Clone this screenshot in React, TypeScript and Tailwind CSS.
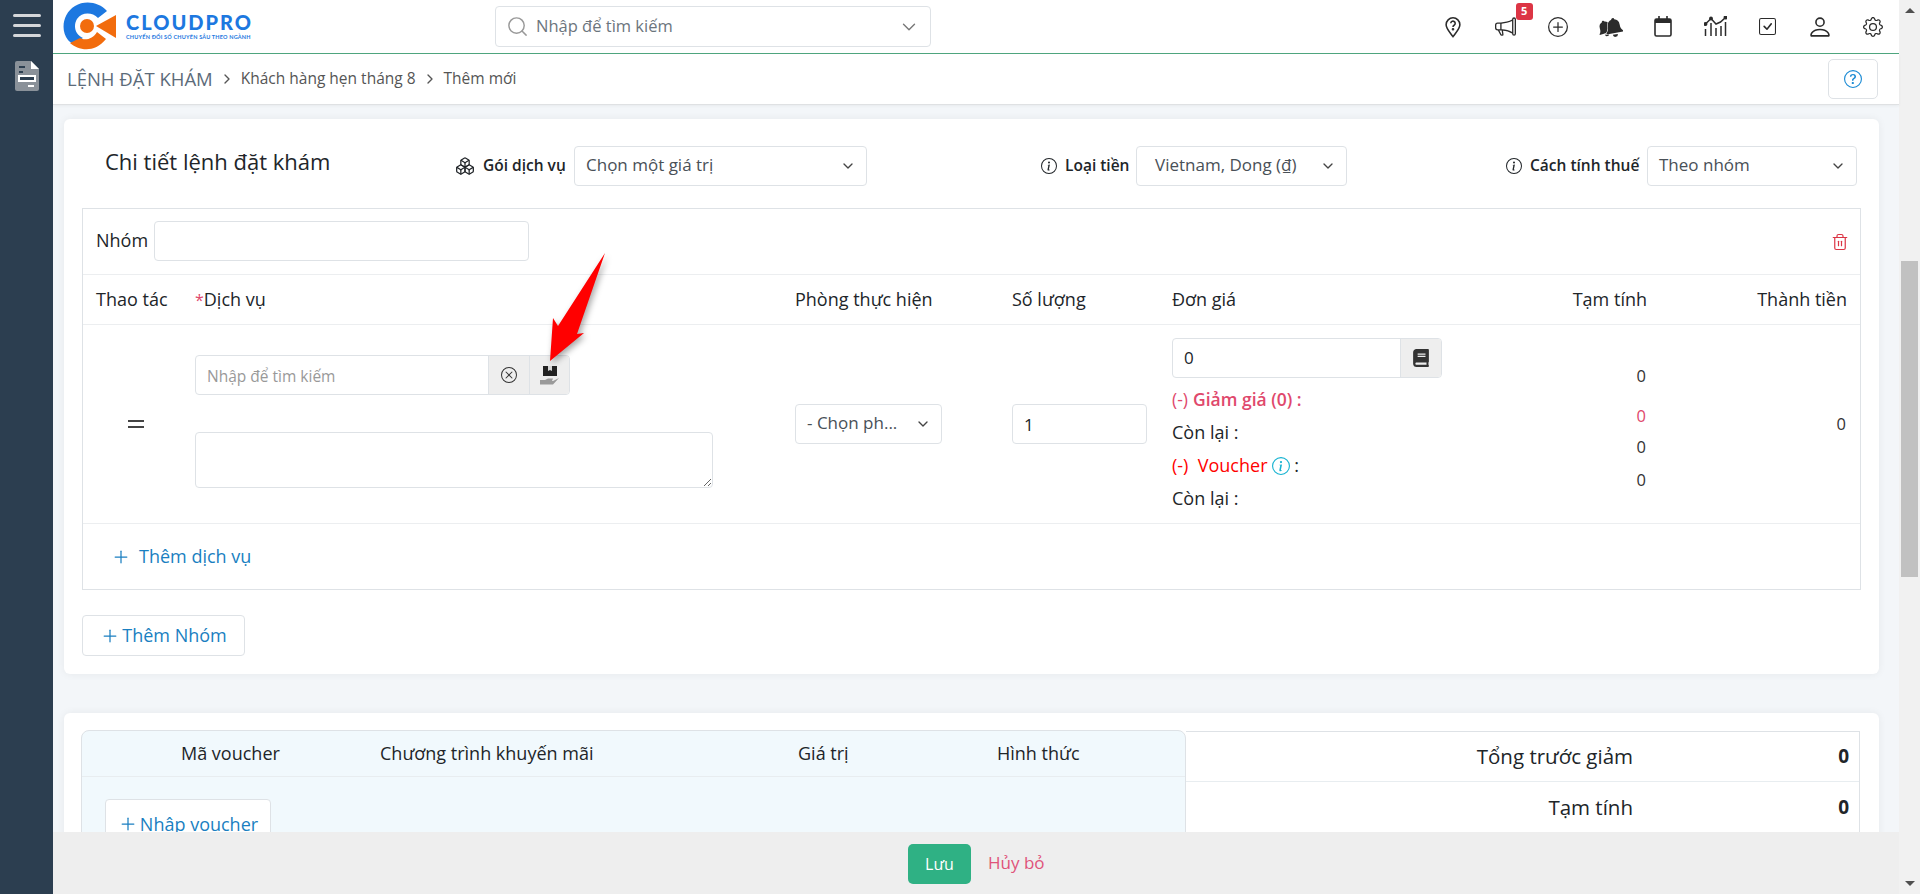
import { Boxes, ChevronDown, ChevronRight, Plus, Search, Trash2 } from "lucide-react";
import { BsCheckSquare, BsGear, BsInfoCircle, BsMegaphone, BsPerson, BsPlusCircle, BsQuestionCircle, BsXCircle } from "react-icons/bs";
import { FaBook } from "react-icons/fa";

const rowCols = "grid grid-cols-[112px_600px_217px_160px_275px_200px_201px]";
const field = "border border-[#dee2e6] rounded-[4px] bg-white outline-none";
const bellPath = "M10 1c-1 0-1.500.7-1.500 1.500C5.500 3.200 4 5.500 4 8.500c0 3.500-1 5-2.500 6.500v1h17v-1C17 13.500 16 12 16 8.500c0-3-1.500-5.300-4.500-6C11.500 1.700 11 1 10 1ZM7.500 17.500a2.500 2.500 0 0 0 5 0Z";

function Logo() {
  return (
    <div className="flex items-center ml-[10px] w-[200px]">
      <svg width="53" height="50" viewBox="0 0 53 50" className="shrink-0">
        <path d="M44 9C36 0 22-2 12 4 0 11-3 28 5 38c1 1 3 3 5 4l10-6c-8-4-10-12-6-19 5-7 15-7 21-1Z" fill="#1d78e0" />
        <path d="M7 41c8 7 24 11 36-4l-9-7c-4 7-12 9-17 6Z" fill="#f26c0d" />
        <circle cx="24" cy="24" r="7" fill="#f26c0d" />
        <path d="M33 24 53 13v23Z" fill="#f26c0d" />
      </svg>
      <div className="ml-[10px] font-['Lato',sans-serif] text-[#1d78e0]">
        <div className="text-[20px] leading-[20px] font-black tracking-[2px] whitespace-nowrap">CLOUDPRO</div>
        <div className="text-[5.5px] leading-[8px] font-bold whitespace-nowrap tracking-[0.2px] mt-[1px]">CHUYỂN ĐỔI SỐ CHUYÊN SÂU THEO NGÀNH</div>
      </div>
    </div>
  );
}

function PinHelp() {
  return (
    <svg width="20" height="22" viewBox="0 0 20 24" fill="none" stroke="#2b2b2b" strokeWidth="1.7">
      <path d="M10 22.5C6 17 2.5 13.5 2.5 9.5a7.5 7.5 0 0 1 15 0c0 4-3.500 7.500-7.500 13Z" />
      <path d="M7.600 8a2.400 2.400 0 1 1 3.600 2.100c-.8.500-1.200 1-1.200 1.900" />
      <circle cx="10" cy="14.500" r=".6" fill="#2b2b2b" />
    </svg>
  );
}

function DoubleBell() {
  return (
    <svg width="26" height="20" viewBox="0 0 26 20">
      <path d={bellPath} fill="#2b2b2b" transform="translate(0 2) rotate(-18 10 10) scale(.85)" />
      <path d={bellPath} fill="#2b2b2b" stroke="#ffffff" strokeWidth="1" paintOrder="stroke" transform="translate(7 0) rotate(-10 10 10)" />
    </svg>
  );
}

function CalendarIcon() {
  return (
    <svg width="18" height="21" viewBox="0 0 18 21" fill="none">
      <rect x="1" y="3" width="16" height="17" rx="1.500" stroke="#2b2b2b" strokeWidth="1.600" />
      <path d="M1 3h16v4H1Z" fill="#2b2b2b" />
      <path d="M5 0v4M13 0v4" stroke="#2b2b2b" strokeWidth="1.600" />
    </svg>
  );
}

function ChartIcon() {
  return (
    <svg width="23" height="21" viewBox="0 0 23 21" fill="none" stroke="#2b2b2b" strokeWidth="1.500">
      <path d="M1.500 8 7 2.500l5 5.500 4.500-2 5-4.500" />
      <path d="M1.500 13v7M7 7v13M12 12v8M17 10v10M21.500 6v14" />
      <circle cx="1.500" cy="8" r="1.200" fill="#2b2b2b" />
      <circle cx="7" cy="2.500" r="1.200" fill="#2b2b2b" />
      <circle cx="21.500" cy="1.500" r="1.200" fill="#2b2b2b" />
    </svg>
  );
}

function HeaderIcons() {
  const icons = [
    <PinHelp />,
    <div className="relative">
      <BsMegaphone size={21} color="#2b2b2b" />
      <span className="absolute -top-[13px] left-[21px] w-[17px] h-[17px] rounded-[3px] bg-[#dc3545] text-white text-[11px] font-bold flex items-center justify-center">5</span>
    </div>,
    <BsPlusCircle size={20} color="#2b2b2b" />,
    <DoubleBell />,
    <CalendarIcon />,
    <ChartIcon />,
    <BsCheckSquare size={17} color="#2b2b2b" />,
    <BsPerson size={26} color="#2b2b2b" />,
    <BsGear size={20} color="#2b2b2b" />,
  ];
  return (
    <div className="flex items-center">
      {icons.map((icon, i) => (
        <div key={i} className="w-[52.5px] flex items-center justify-center">{icon}</div>
      ))}
    </div>
  );
}

function SelectBox({ label, width, pad = "pl-[11px]" }: { label: string; width: string; pad?: string }) {
  return (
    <div className={`${field} ${width} ${pad} h-[40px] shrink-0 flex items-center justify-between pr-[10px] text-[17px] font-normal text-[#495057]`}>
      <span className="whitespace-nowrap -mt-[2px]">{label}</span>
      <ChevronDown size={16} color="#444" className="shrink-0" />
    </div>
  );
}

function HandBox() {
  return (
    <svg width="20" height="19" viewBox="0 0 20 19">
      <path d="M3 0h14v10H3Z" fill="#222" />
      <path d="M8 0h4v5l-2-1-2 1Z" fill="#d8d8d8" />
      <path d="M0 14h5l3-1.500h5l-1 2.500H8h5l6-3-6 6.500H0Z" fill="#9a9a9a" />
    </svg>
  );
}

function ArrowMark() {
  // annotation drawn on top of the screenshot
  return (
    <svg width="70" height="120" viewBox="0 0 70 120" className="absolute left-[543px] top-[250px] pointer-events-none drop-shadow-[2px_3px_3px_rgba(0,0,0,0.35)]">
      <path d="M62 3 34 84l7-1L7 111l3-43 5 8Z" fill="#ff0000" />
    </svg>
  );
}

function GroupBox() {
  return (
    <div className="mx-[18px] mt-[22px] border border-[#dee2e6] text-[18px] text-[#212529]">
      <div className="h-[66px] pb-[2px] flex items-center justify-between pl-[13px] pr-[11px] border-b border-[#eceef0]">
        <div className="flex items-center gap-[6px]">
          <span className="font-medium">Nhóm</span>
          <input className={`${field} w-[375px] h-[40px]`} />
        </div>
        <Trash2 size={18} color="#dc3545" strokeWidth={1.600} className="mt-[2px]" />
      </div>
      <div className={`${rowCols} h-[50px] items-center border-b border-[#eceef0] font-medium`}>
        <div className="pl-[13px]">Thao tác</div>
        <div><span className="text-[16px] font-normal text-[#e0486c]">*</span>Dịch vụ</div>
        <div>Phòng thực hiện</div>
        <div>Số lượng</div>
        <div>Đơn giá</div>
        <div className="text-right">Tạm tính</div>
        <div className="text-right pr-[1px]">Thành tiền</div>
      </div>
      <div className={`${rowCols} h-[199px] border-b border-[#eceef0]`}>
        <div className="flex items-center pl-[45px]">
          <div className="w-[16px] h-[8px] border-y-2 border-[#444]" />
        </div>
        <div className="pt-[30px]">
          <div className={`${field} w-[375px] h-[40px] flex overflow-hidden`}>
            <input placeholder="Nhập để tìm kiếm" className="flex-1 min-w-0 pl-[11px] pt-[3px] text-[15.5px] outline-none placeholder:text-[#999]" />
            <div className="w-[41px] bg-[#eeeeee] border-l border-[#dee2e6] flex items-center justify-center">
              <BsXCircle size={16} color="#333" />
            </div>
            <div className="w-[40px] bg-[#eeeeee] border-l border-[#dee2e6] flex items-center justify-center">
              <HandBox />
            </div>
          </div>
          <textarea className={`${field} block w-[518px] h-[56px] mt-[37px]`} />
        </div>
        <div className="flex items-center">
          <SelectBox label="- Chọn ph..." width="w-[147px]" />
        </div>
        <div className="flex items-center">
          <input defaultValue="1" className={`${field} w-[135px] h-[40px] pl-[11px] text-[17px]`} />
        </div>
        <div className="pt-[13px] font-medium">
          <div className={`${field} w-[270px] h-[40px] flex overflow-hidden`}>
            <input defaultValue="0" className="flex-1 min-w-0 pl-[11px] text-[17px] font-normal outline-none" />
            <div className="w-[41px] bg-[#eeeeee] border-l border-[#dee2e6] flex items-center justify-center">
              <FaBook size={18} color="#333" />
            </div>
          </div>
          <div className="mt-[5px] h-[33px] flex items-center text-[17.5px] text-[#e0486c]">
            <span className="font-normal mr-[5px]">(-)</span><span className="font-semibold">Giảm giá (0) :</span>
          </div>
          <div className="h-[33px] flex items-center">Còn lại :</div>
          <div className="h-[33px] flex items-center">
            <span className="text-[#ff0000] whitespace-pre">(-)  Voucher </span>
            <BsInfoCircle size={18} color="#17b3d1" />
            <span className="ml-[4px]">:</span>
          </div>
          <div className="h-[33px] flex items-center">Còn lại :</div>
        </div>
        <div className="pr-[1px] pt-[41px] flex flex-col items-end text-[16.5px] leading-[20px] text-[#333]">
          <div>0</div>
          <div className="mt-[20px] text-[#e0486c]">0</div>
          <div className="mt-[11px]">0</div>
          <div className="mt-[13px]">0</div>
        </div>
        <div className="flex items-center justify-end pr-[2px] text-[16.5px] text-[#333]">0</div>
      </div>
      <div className="h-[65px] flex items-center pl-[28px] text-[#1a7fc1] gap-[8px]">
        <Plus size={20} strokeWidth={1.500} />
        <span>Thêm dịch vụ</span>
      </div>
    </div>
  );
}

function AddButton({ label, className }: { label: string; className: string }) {
  return (
    <div className={`${className} border border-[#dee2e6] rounded-[4px] bg-white flex items-center justify-center gap-[2px] text-[#1a7fc1] whitespace-nowrap`}>
      <Plus size={20} strokeWidth={1.500} />
      <span>{label}</span>
    </div>
  );
}

function VoucherCard() {
  return (
    <div className="mt-[39px] bg-white rounded-t-[6px] shadow-[0_0_8px_rgba(0,0,0,0.06)] pt-[17px] px-[17px] flex text-[#212529]">
      <div className="w-[1105px] bg-[#f1f9fd] border border-[#dee2e6] rounded-t-[8px]">
        <div className="h-[46px] relative flex items-center border-b border-[#e8edf0] text-[18px] font-medium">
          <span className="ml-[99px] w-[199px]">Mã voucher</span>
          <span className="w-[418px]">Chương trình khuyến mãi</span>
          <span className="w-[199px]">Giá trị</span>
          <span>Hình thức</span>
        </div>
        <AddButton label="Nhập voucher" className="ml-[23px] mt-[22px] w-[166px] h-[50px] text-[18px]" />
      </div>
      <div className="w-[674px] mt-[1px] border border-[#dee2e6] border-l-0 text-[20.5px] font-medium">
        <div className="h-[50px] flex items-center justify-end border-b border-[#e8edf0]">
          <span>Tổng trước giảm</span>
          <span className="w-[226px] pr-[10px] text-right text-[19px] font-bold">0</span>
        </div>
        <div className="h-[50px] flex items-center justify-end">
          <span>Tạm tính</span>
          <span className="w-[226px] pr-[10px] text-right text-[19px] font-bold">0</span>
        </div>
      </div>
    </div>
  );
}

function ScrollBar() {
  return (
    <div className="w-[21px] shrink-0 bg-[#f1f1f1] flex flex-col items-center justify-between py-[8px]">
      <div className="flex flex-col items-center w-full">
        <div className="border-x-[5px] border-x-transparent border-b-[5px] border-b-[#505050]" />
        <div className="w-[17px] h-[316px] bg-[#c1c1c1] mt-[248px]" />
      </div>
      <div className="border-x-[5px] border-x-transparent border-t-[5px] border-t-[#505050]" />
    </div>
  );
}

export default function App() {
  return (
    <div className="relative flex h-screen overflow-hidden font-['Open_Sans',sans-serif] text-[#212529]">
      <aside className="w-[53px] shrink-0 bg-[#2c3e50] flex flex-col items-center">
        <div className="mt-[14px] flex flex-col gap-[7px] w-[28px]">
          <div className="h-[3px] rounded-full bg-[#d5d7da]" />
          <div className="h-[3px] rounded-full bg-[#d5d7da]" />
          <div className="h-[3px] rounded-full bg-[#d5d7da]" />
        </div>
        <svg width="24" height="30" viewBox="0 0 24 30" className="mt-[24px]">
          <path d="M2 0h14l8 8v20a2 2 0 0 1-2 2H2a2 2 0 0 1-2-2V2a2 2 0 0 1 2-2Z" fill="#8a9199" />
          <path d="M16 0l8 8h-8Z" fill="#fff" />
          <path d="M4 5h6v2H4ZM4 10h4v2H4Z" fill="#2c3e50" />
          <path d="M3 14h18v7H3Z" fill="#fff" />
          <path d="M5 16h14v3H5Z" fill="#2c3e50" />
          <path d="M13 24h6v2h-6Z" fill="#fff" />
        </svg>
      </aside>

      <div className="flex-1 min-w-0 flex flex-col">
        <header className="h-[54px] shrink-0 bg-white border-b border-[#4fa77f] flex items-center justify-between">
          <div className="flex items-center">
            <Logo />
            <div className={`${field} ml-[232px] w-[436px] h-[41px] flex items-center pl-[10px] pr-[10px] text-[16.5px] text-[#6c757d]`}>
              <Search size={23} color="#999" strokeWidth={1.500} />
              <span className="ml-[7px] flex-1">Nhập để tìm kiếm</span>
              <ChevronDown size={22} color="#777" strokeWidth={1.500} />
            </div>
          </div>
          <HeaderIcons />
        </header>

        <div className="h-[51px] shrink-0 bg-white border-b border-[#dfe1e3] flex items-center justify-between pl-[14px] pr-[21px] shadow-[0_1px_3px_rgba(0,0,0,0.05)] z-10">
          <div className="flex items-center text-[15.5px] text-[#555]">
            <span className="text-[18.5px] font-medium text-[#5c6b7a]">LỆNH ĐẶT KHÁM</span>
            <ChevronRight size={16} className="mx-[6px]" />
            <span>Khách hàng hẹn tháng 8</span>
            <ChevronRight size={16} className="mx-[6px]" />
            <span>Thêm mới</span>
          </div>
          <div className="w-[50px] h-[40px] border border-[#dee2e6] rounded-[5px] flex items-center justify-center">
            <BsQuestionCircle size={18} color="#1a8ad4" />
          </div>
        </div>

        <main className="flex-1 min-h-0 overflow-hidden bg-[#f3f6f9] pt-[14px] pl-[11px] pr-[20px]">
          <section className="h-[555px] bg-white rounded-[6px] shadow-[0_0_8px_rgba(0,0,0,0.06)] pt-[27px]">
            <div className="flex items-center h-[40px] pl-[41px] text-[15.5px] font-semibold whitespace-nowrap">
              <h1 className="w-[350px] -mt-[11px] text-[22px] leading-none font-medium">Chi tiết lệnh đặt khám</h1>
              <div className="flex items-center gap-[8px]">
                <Boxes size={20} strokeWidth={1.500} />
                <span className="w-[83px]">Gói dịch vụ</span>
                <SelectBox label="Chọn một giá trị" width="w-[293px]" />
              </div>
              <div className="flex items-center gap-[8px] ml-[174px]">
                <BsInfoCircle size={16} />
                <span className="w-[63px]">Loại tiền</span>
                <SelectBox label="Vietnam, Dong (₫)" width="w-[211px]" pad="pl-[18px]" />
              </div>
              <div className="flex items-center gap-[8px] ml-[159px]">
                <BsInfoCircle size={16} />
                <span className="w-[109px]">Cách tính thuế</span>
                <SelectBox label="Theo nhóm" width="w-[210px]" />
              </div>
            </div>
            <GroupBox />
            <AddButton label="Thêm Nhóm" className="ml-[18px] mt-[25px] w-[163px] h-[41px] text-[18px]" />
          </section>
          <VoucherCard />
        </main>

        <footer className="h-[62px] shrink-0 bg-[#eeeeee] flex items-start pl-[855px] pt-[12px] text-[16px]">
          <div className="w-[63px] h-[40px] rounded-[5px] bg-[#2fb184] text-white flex items-center justify-center">Lưu</div>
          <span className="ml-[17px] mt-[6px] text-[17px] text-[#e0537a]">Hủy bỏ</span>
        </footer>
      </div>

      <ScrollBar />
      <ArrowMark />
    </div>
  );
}
